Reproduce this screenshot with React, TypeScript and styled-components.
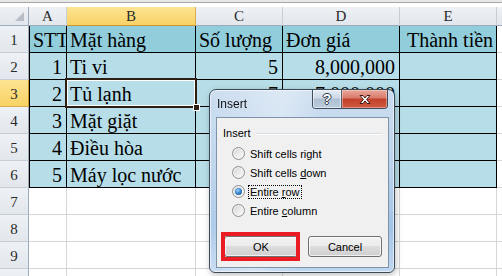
import styled, { createGlobalStyle } from "styled-components";

const GlobalStyle = createGlobalStyle`
  html, body {
    margin: 0;
    padding: 0;
    background: #ffffff;
    overflow: hidden;
  }
`;

type Kind = "head" | "body" | "blank";

type RowData = {
  cells: string[];
  kind: Kind;
};

const columns = ["A", "B", "C", "D", "E", ""];

const rows: RowData[] = [
  { cells: ["STT", "Mặt hàng", "Số lượng", "Đơn giá", "Thành tiền", ""], kind: "head" },
  { cells: ["1", "Ti vi", "5", "8,000,000", "", ""], kind: "body" },
  { cells: ["2", "Tủ lạnh", "7", "7,000,000", "", ""], kind: "body" },
  { cells: ["3", "Mặt giặt", "", "", "", ""], kind: "body" },
  { cells: ["4", "Điều hòa", "", "", "", ""], kind: "body" },
  { cells: ["5", "Máy lọc nước", "", "", "", ""], kind: "body" },
  { cells: ["", "", "", "", "", ""], kind: "blank" },
  { cells: ["", "", "", "", "", ""], kind: "blank" },
  { cells: ["", "", "", "", "", ""], kind: "blank" },
  { cells: ["", "", "", "", "", ""], kind: "blank" },
];

const options = [
  { label: "Shift cells right", key: -1 },
  { label: "Shift cells down", key: 12 },
  { label: "Entire row", key: 7 },
  { label: "Entire column", key: 7 },
];

const isNumber = (v: string) => /^[0-9,]+$/.test(v);

const App = () => {
  return (
    <>
      <GlobalStyle />
      <Sheet>
        <FormulaEdge />
        <Grid>
          <CornerCell>
            <CornerTriangle />
          </CornerCell>
          {columns.map((c, i) => (
            <ColHeader key={i} $active={c === "B"}>
              {c}
            </ColHeader>
          ))}
          {rows.map((row, r) => (
            <Row key={r} row={row} index={r} />
          ))}
        </Grid>

        <Dialog>
          <TitleBar>
            <Title>Insert</Title>
            <CaptionButtons>
              <HelpButton>?</HelpButton>
              <CloseButton>
                <svg width="14" height="11" viewBox="0 0 14 11">
                  <path
                    d="M2 1.5 L5 1.5 L7 4 L9 1.5 L12 1.5 L8.6 5.5 L12 9.5 L9 9.5 L7 7 L5 9.5 L2 9.5 L5.4 5.5 Z"
                    fill="#ffffff"
                    stroke="#3b1a14"
                    strokeWidth="1"
                    strokeLinejoin="round"
                  />
                </svg>
              </CloseButton>
            </CaptionButtons>
          </TitleBar>
          <Client>
            <GroupHeader>
              <span>Insert</span>
              <GroupLine />
            </GroupHeader>
            <RadioList>
              {options.map((o, i) => (
                <RadioRow key={o.label}>
                  <Radio $checked={i === 2} />
                  <RadioLabel $focused={i === 2}>
                    {o.key < 0 ? (
                      o.label
                    ) : (
                      <>
                        {o.label.slice(0, o.key)}
                        <u>{o.label[o.key]}</u>
                        {o.label.slice(o.key + 1)}
                      </>
                    )}
                  </RadioLabel>
                </RadioRow>
              ))}
            </RadioList>
            <ButtonRow>
              <ButtonSlot>
                <PushButton>OK</PushButton>
                <Highlight />
              </ButtonSlot>
              <PushButton>Cancel</PushButton>
            </ButtonRow>
          </Client>
        </Dialog>
      </Sheet>
    </>
  );
};

const Row = ({ row, index }: { row: RowData; index: number }) => {
  const num = index + 1;
  return (
    <>
      <RowHeader $active={num === 3}>{num}</RowHeader>
      {row.cells.map((v, c) => {
        const kind: Kind = c === 5 ? "blank" : row.kind;
        const right = row.kind === "body" && isNumber(v);
        const selected = num === 3 && c === 1;
        return (
          <Cell
            key={c}
            $kind={kind}
            $first={c === 0 && kind !== "blank"}
            $right={right}
            $indent={row.kind === "head" && c === 4 ? 4 : 0}
          >
            {v}
            {selected && (
              <Selection>
                <FillHandle />
              </Selection>
            )}
          </Cell>
        );
      })}
    </>
  );
};

export default App;

const Sheet = styled.div`
  position: relative;
  width: 502px;
  height: 276px;
  overflow: hidden;
  background: #ffffff;
`;

const FormulaEdge = styled.div`
  height: 7px;
  background: linear-gradient(
    #e8e8e8 0px,
    #e8e8e8 2px,
    #a7a7a7 2px,
    #a7a7a7 3px,
    #ffffff 3px
  );
`;

const Grid = styled.div`
  display: grid;
  grid-template-columns: 29px 38px 129px 87px 117px 97px 1fr;
  grid-template-rows: 19px;
  grid-auto-rows: 27px;
  font-family: "Liberation Serif", "Times New Roman", serif;
`;

const headerBg = "linear-gradient(#eef1f5, #e2e7ed)";
const activeBg = "linear-gradient(#fde393, #f8d264)";

const CornerCell = styled.div`
  position: relative;
  box-sizing: border-box;
  background: ${headerBg};
  border-right: 1px solid #9eabba;
  border-bottom: 1px solid #9eabba;
`;

const CornerTriangle = styled.div`
  position: absolute;
  right: 4px;
  bottom: 4px;
  width: 0;
  height: 0;
  border-left: 9px solid transparent;
  border-bottom: 9px solid #b7bec7;
`;

const ColHeader = styled.div<{ $active?: boolean }>`
  box-sizing: border-box;
  display: flex;
  align-items: center;
  justify-content: center;
  background: ${(p) => (p.$active ? activeBg : headerBg)};
  border-right: 1px solid ${(p) => (p.$active ? "#d9ad4f" : "#c6cdd6")};
  border-bottom: 1px solid ${(p) => (p.$active ? "#c8972f" : "#9eabba")};
  color: #2a2a2a;
  font-size: 15px;
  line-height: 17px;
`;

const RowHeader = styled.div<{ $active?: boolean }>`
  box-sizing: border-box;
  display: flex;
  align-items: flex-end;
  justify-content: center;
  padding-bottom: 3px;
  background: ${(p) => (p.$active ? activeBg : headerBg)};
  border-right: 1px solid ${(p) => (p.$active ? "#c8972f" : "#9eabba")};
  border-bottom: 1px solid ${(p) => (p.$active ? "#d9ad4f" : "#c6cdd6")};
  color: #2a2a2a;
  font-size: 15px;
  line-height: 17px;
`;

const cellFill: Record<Kind, string> = {
  head: "#92cddc",
  body: "#b7dee8",
  blank: "#ffffff",
};

const Cell = styled.div<{
  $kind: Kind;
  $first?: boolean;
  $right?: boolean;
  $indent: number;
}>`
  position: relative;
  box-sizing: border-box;
  display: flex;
  align-items: flex-end;
  justify-content: ${(p) => (p.$right ? "flex-end" : "flex-start")};
  padding: 0 4px 0 ${(p) => 3 + p.$indent}px;
  background: ${(p) => cellFill[p.$kind]};
  border-right: 1px solid ${(p) => (p.$kind === "blank" ? "#d6d6d6" : "#000000")};
  border-bottom: 1px solid ${(p) => (p.$kind === "blank" ? "#d6d6d6" : "#000000")};
  border-left: ${(p) => (p.$first ? "1px solid #000000" : "none")};
  color: #000000;
  font-size: 20px;
  line-height: 23px;
  white-space: nowrap;
`;

const Selection = styled.div`
  position: absolute;
  left: -2px;
  top: -2px;
  right: -2px;
  bottom: -2px;
  border: 2px solid #2e1f14;
  box-shadow: inset 0 0 0 1px #ffffff;
  pointer-events: none;
  z-index: 1;
`;

const FillHandle = styled.div`
  position: absolute;
  right: -5px;
  bottom: -5px;
  width: 5px;
  height: 5px;
  background: #2e1f14;
  border: 1px solid #ffffff;
`;

const Dialog = styled.div`
  position: absolute;
  left: 209px;
  top: 89px;
  width: 186px;
  height: 184px;
  box-sizing: border-box;
  display: flex;
  flex-direction: column;
  border: 1px solid #3a4857;
  border-radius: 7px 7px 6px 6px;
  background: linear-gradient(
      100deg,
      rgba(255, 255, 255, 0) 0%,
      rgba(255, 255, 255, 0.35) 35%,
      rgba(255, 255, 255, 0) 55%
    ),
    linear-gradient(
      180deg,
      rgba(204, 221, 239, 0.98) 0%,
      rgba(188, 211, 236, 0.98) 40%,
      rgba(162, 195, 230, 0.99) 75%,
      rgba(190, 214, 240, 0.99) 100%
    );
  backdrop-filter: blur(4px);
  box-shadow: inset 0 0 0 1px rgba(255, 255, 255, 0.6),
    1px 2px 6px rgba(0, 0, 0, 0.25);
  font-family: "Liberation Sans", Arial, sans-serif;
  z-index: 2;
`;

const TitleBar = styled.div`
  height: 27px;
  display: flex;
  align-items: flex-start;
  padding-left: 7px;
`;

const Title = styled.div`
  margin-top: 7px;
  font-size: 12px;
  line-height: 14px;
  color: #111111;
`;

const CaptionButtons = styled.div`
  margin-left: auto;
  margin-right: 6px;
  display: flex;
  height: 18px;
  border: 1px solid #3e4d5e;
  border-top: none;
  border-radius: 0 0 4px 4px;
  overflow: hidden;
`;

const HelpButton = styled.div`
  width: 28px;
  display: flex;
  align-items: center;
  justify-content: center;
  background: linear-gradient(
    #e4ecf4 0%,
    #cdd9e6 45%,
    #aebfd2 50%,
    #bccde0 100%
  );
  border-right: 1px solid #56606c;
  box-shadow: inset 0 0 0 1px rgba(255, 255, 255, 0.55);
  color: #ffffff;
  font: bold 14px "Liberation Sans", Arial, sans-serif;
  text-shadow: 1px 0 0 #2d3a48, -1px 0 0 #2d3a48, 0 1px 0 #2d3a48,
    0 -1px 0 #2d3a48;
`;

const CloseButton = styled.div`
  width: 45px;
  display: flex;
  align-items: center;
  justify-content: center;
  background: linear-gradient(
    #e9a99b 0%,
    #d8796a 45%,
    #c2402a 50%,
    #cf5a40 100%
  );
  box-shadow: inset 0 0 0 1px rgba(255, 220, 210, 0.45);
`;

const Client = styled.div`
  flex: 1;
  margin: 0 5px 4px 6px;
  display: flex;
  flex-direction: column;
  background: #f0f0f0;
  border: 1px solid #7f93a8;
  font-size: 11px;
  color: #000000;
`;

const GroupHeader = styled.div`
  display: flex;
  align-items: center;
  gap: 5px;
  padding: 9px 6px 0 6px;
  line-height: 13px;
`;

const GroupLine = styled.div`
  flex: 1;
  height: 1px;
  background: #d5dfe5;
  box-shadow: 0 1px 0 #ffffff;
`;

const RadioList = styled.div`
  margin-top: 4px;
  padding-left: 15px;
  display: flex;
  flex-direction: column;
`;

const RadioRow = styled.div`
  height: 19px;
  display: flex;
  align-items: center;
  gap: 3px;
`;

const Radio = styled.div<{ $checked?: boolean }>`
  position: relative;
  width: 13px;
  height: 13px;
  box-sizing: border-box;
  border-radius: 50%;
  border: 1px solid #8e8f8f;
  background: linear-gradient(135deg, #d2d2d2 0%, #ececec 55%, #fbfbfb 100%);
  box-shadow: inset 0 0 0 1px #f4f4f4;

  &::after {
    content: "";
    display: ${(p) => (p.$checked ? "block" : "none")};
    position: absolute;
    left: 2px;
    top: 2px;
    width: 7px;
    height: 7px;
    border-radius: 50%;
    background: radial-gradient(
      circle at 40% 35%,
      #9fd0f5 0%,
      #3a8ad3 45%,
      #0f3e72 100%
    );
  }
`;

const RadioLabel = styled.span<{ $focused?: boolean }>`
  padding: 0 1px;
  line-height: 12px;
  border: 1px dotted ${(p) => (p.$focused ? "#000000" : "transparent")};
`;

const ButtonRow = styled.div`
  margin-top: auto;
  display: flex;
  justify-content: flex-end;
  gap: 10px;
  padding: 0 6px 10px 0;
`;

const ButtonSlot = styled.div`
  position: relative;
  display: flex;
`;

const PushButton = styled.div`
  width: 74px;
  height: 21px;
  box-sizing: border-box;
  display: flex;
  align-items: center;
  justify-content: center;
  border: 1px solid #707070;
  border-radius: 3px;
  background: linear-gradient(
    #f2f2f2 0%,
    #ebebeb 49%,
    #dddddd 50%,
    #cfcfcf 100%
  );
  box-shadow: inset 0 0 0 1px rgba(255, 255, 255, 0.7);
  color: #000000;
`;

const Highlight = styled.div`
  position: absolute;
  left: -3px;
  right: -2px;
  top: -4px;
  bottom: -4px;
  border: 4px solid #ec1c24;
  pointer-events: none;
`;
